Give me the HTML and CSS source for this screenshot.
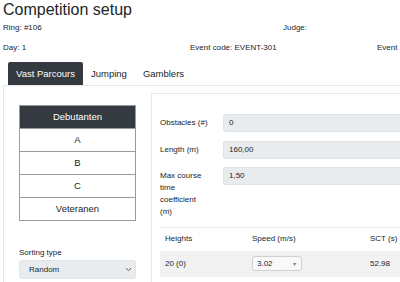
FILE: index.html
```html
<!DOCTYPE html>
<html>
<head>
<meta charset="utf-8">
<link rel="stylesheet" href="styles.css">
</head>
<body>
<div class="page">
  <h2 class="title">Competition setup</h2>
  <div class="info info-2">
    <div>Ring: #106</div>
    <div>Judge:</div>
  </div>
  <div class="info info-3">
    <div>Day: 1</div>
    <div>Event code: EVENT-301</div>
    <div>Event type: Jumping</div>
  </div>
  <ul class="tabs">
    <li class="tab active">Vast Parcours</li>
    <li class="tab">Jumping</li>
    <li class="tab">Gamblers</li>
  </ul>
  <div class="tab-content">
    <div class="side">
      <ul class="levels">
        <li class="level active">Debutanten</li>
        <li class="level">A</li>
        <li class="level">B</li>
        <li class="level">C</li>
        <li class="level">Veteranen</li>
      </ul>
      <div class="sort-label">Sorting type</div>
      <div class="select">
        <span>Random</span>
        <svg class="chev" width="7" height="5" viewBox="0 0 7 5"><path d="M1 1.2 L3.5 3.6 L6 1.2" fill="none" stroke="#555" stroke-width="1"/></svg>
      </div>
    </div>
    <div class="card">
      <div class="form-row">
        <label class="lbl">Obstacles (#)</label>
        <div class="input">0</div>
      </div>
      <div class="form-row">
        <label class="lbl">Length (m)</label>
        <div class="input">160,00</div>
      </div>
      <div class="form-row">
        <label class="lbl">Max course time coefficient (m)</label>
        <div class="input">1,50</div>
      </div>
      <table class="heights">
        <thead>
          <tr><th class="c1">Heights</th><th class="c2">Speed (m/s)</th><th class="c3">SCT (s)</th></tr>
        </thead>
        <tbody>
          <tr><td>20 (0)</td><td><div class="mini-select"><span>3.02</span><span class="tri">&#9662;</span></div></td><td>52.98</td></tr>
        </tbody>
      </table>
    </div>
  </div>
</div>
</body>
</html>
```
FILE: styles.css
```css
html, body {
  margin: 0;
  padding: 0;
  width: 400px;
  height: 282px;
  overflow: hidden;
  background: #fff;
}
body {
  font-family: "Liberation Sans", Arial, sans-serif;
  color: #212529;
  font-size: 8px;
  line-height: 12px;
}
.page {
  width: 600px;
  padding-left: 3px;
}
.title {
  margin: 0 0 3px 0;
  font-size: 16px;
  line-height: 19px;
  font-weight: 400;
}
.info {
  display: grid;
  margin-bottom: 8px;
  width: 561px;
}
.info-2 { grid-template-columns: 280px 280px; }
.info-3 { grid-template-columns: 187px 187px 187px; white-space: nowrap; }
.tabs {
  list-style: none;
  margin: 7px 0 0 5px;
  padding: 0;
  display: flex;
}
.tab {
  font-size: 9.5px;
  line-height: 11px;
  padding: 6px 8px;
  border-radius: 2px 2px 0 0;
}
.tab.active {
  background: #343a40;
  color: #fff;
}
.tab-content {
  display: flex;
  align-items: flex-start;
  border: 1px solid #e6e8ea;
  width: 700px;
  height: 300px;
}
.side {
  width: 117px;
  padding: 19px 15px 0 15px;
  flex: none;
}
.levels {
  list-style: none;
  margin: 0;
  padding: 0;
  border: 1px solid #9a9a9a;
}
.level {
  height: 22px;
  line-height: 22px;
  text-align: center;
  font-size: 9.5px;
  border-top: 1px solid #9a9a9a;
}
.level:first-child { border-top: none; }
.level.active {
  background: #343a40;
  color: #fff;
}
.sort-label {
  margin-top: 26px;
  line-height: 12px;
}
.select {
  margin-top: 1px;
  height: 19px;
  box-sizing: border-box;
  background: #e9ecef;
  border: 1px solid #e1e4e7;
  border-radius: 3px;
  display: flex;
  align-items: center;
  justify-content: space-between;
  padding: 0 3px 0 9px;
}
.chev { display: block; }
.card {
  flex: 1;
  margin-top: 7px;
  border: 1px solid #e6e8ea;
  padding: 20px 8px 0 8px;
  height: 300px;
}
.form-row {
  display: flex;
  align-items: flex-start;
  margin-bottom: 8.5px;
}
.lbl {
  width: 49px;
  margin-right: 14px;
  padding-top: 3px;
  line-height: 12px;
  flex: none;
  white-space: normal;
}
.input {
  flex: 1;
  height: 18px;
  box-sizing: border-box;
  background: #e9ecef;
  border: 1px solid #dfe3e7;
  border-radius: 2px;
  padding-left: 5px;
  line-height: 16px;
}
.heights {
  border-collapse: collapse;
  margin-top: 1px;
  width: 400px;
}
.heights th {
  font-weight: 400;
  text-align: left;
  height: 23px;
  padding: 0 0 0 5px;
  border-top: 1px solid #e9ecef;
  vertical-align: middle;
}
.heights .c1 { width: 82px; }
.heights .c2 { width: 113px; }
.heights td {
  background: #f2f2f2;
  height: 26px;
  padding: 0 0 0 5px;
  vertical-align: middle;
}
.mini-select {
  width: 50px;
  height: 15px;
  box-sizing: border-box;
  border: 1px solid #d0d0d0;
  border-radius: 3px;
  background: #f9f9f9;
  display: flex;
  align-items: center;
  justify-content: space-between;
  padding: 0 5px 0 4px;
  line-height: 12px;
}
.tri {
  font-size: 6px;
  color: #777;
}
```
